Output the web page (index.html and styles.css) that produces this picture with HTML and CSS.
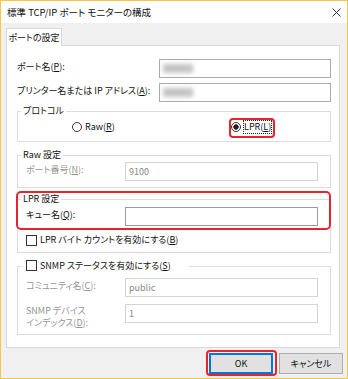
FILE: index.html
```html
<!DOCTYPE html>
<html lang="ja">
<head>
<meta charset="utf-8">
<title>標準 TCP/IP ポート モニターの構成</title>
<link rel="stylesheet" href="styles.css">
</head>
<body>
<div class="window">
  <div class="titlebar">
    <span class="title">標準 TCP/IP ポート モニターの構成</span>
    <svg class="close" width="9" height="9" viewBox="0 0 9 9"><path d="M0.5 0.5 L8.5 8.5 M8.5 0.5 L0.5 8.5" stroke="#333" stroke-width="1" fill="none"/></svg>
  </div>
  <div class="client">
    <div class="tabs"><div class="tab">ポートの設定</div></div>
    <div class="panel">
      <div class="row">
        <span class="lbl">ポート名(<u>P</u>):</span>
        <div class="input"><span class="blur"></span></div>
      </div>
      <div class="row">
        <span class="lbl">プリンター名または IP アドレス(<u>A</u>):</span>
        <div class="input"><span class="blur"></span></div>
      </div>
      <fieldset class="group proto">
        <legend>プロトコル</legend>
        <div class="radios">
          <div class="radio"><span class="rb"></span><span class="rtext">Raw(<u>R</u>)</span></div>
          <div class="radio"><span class="rb checked"></span><span class="rtext focus">LPR(<u>L</u>)</span></div>
        </div>
      </fieldset>
      <fieldset class="group raw">
        <legend>Raw 設定</legend>
        <div class="grow">
          <span class="glbl dis">ポート番号(<u>N</u>):</span>
          <div class="ginput dis">9100</div>
        </div>
      </fieldset>
      <fieldset class="group lpr">
        <legend>LPR 設定</legend>
        <div class="grow">
          <span class="glbl">キュー名(<u>Q</u>):</span>
          <div class="ginput en"></div>
        </div>
        <div class="check"><span class="cb"></span><span>LPR バイト カウントを有効にする(<u>B</u>)</span></div>
      </fieldset>
      <fieldset class="group snmp">
        <legend class="cblegend"><span class="cb"></span><span class="cbtext">SNMP ステータスを有効にする(<u>S</u>)</span></legend>
        <div class="grow">
          <span class="glbl dis">コミュニティ名(<u>C</u>):</span>
          <div class="ginput dis">public</div>
        </div>
        <div class="grow second">
          <span class="glbl dis two">SNMP デバイス<br>インデックス(<u>D</u>):</span>
          <div class="ginput dis">1</div>
        </div>
      </fieldset>
    </div>
    <div class="buttons">
      <button class="btn default">OK</button>
      <button class="btn">キャンセル</button>
    </div>
  </div>
  <div class="mark mark-radio"></div>
  <div class="mark mark-lpr"></div>
  <div class="mark mark-ok"></div>
</div>
</body>
</html>
```

FILE: styles.css
```css
* { box-sizing: border-box; }

body {
  margin: 0;
  font-family: "Noto Sans CJK JP", "Noto Sans", sans-serif;
  font-size: 9px;
  line-height: 14px;
  font-feature-settings: "palt";
  color: #111;
  background: #fff;
}

u { text-decoration: underline; text-underline-offset: 1px; }

.window {
  position: relative;
  width: 348px;
  height: 379px;
  border: 1px solid #f3c64a;
  background: #f0f0f0;
  display: flex;
  flex-direction: column;
  overflow: hidden;
}

.titlebar {
  flex: none;
  height: 22px;
  background: #fff;
  display: flex;
  align-items: center;
  justify-content: space-between;
  padding: 0 6px 0 6px;
}

.title { font-size: 9.5px; color: #111; white-space: nowrap; }

.close { display: block; }

.client {
  flex: 1;
  min-height: 0;
  display: flex;
  flex-direction: column;
  padding: 5px 4px 4px 5px;
}

.tabs { display: flex; flex: none; }

.tab {
  position: relative;
  z-index: 1;
  width: 56px;
  height: 18px;
  margin-bottom: -1px;
  border: 1px solid #d9d9d9;
  border-bottom: none;
  background: #fff;
  display: flex;
  align-items: center;
  justify-content: center;
  white-space: nowrap;
}

.panel {
  flex: 1;
  min-height: 0;
  margin-right: 3px;
  background: #fff;
  border: 1px solid #d9d9d9;
  padding: 13px 8px 0 10px;
  display: flex;
  flex-direction: column;
}

.row { display: flex; align-items: flex-start; flex: none; }
.row + .row { margin-top: 5px; }

.lbl { width: 142px; line-height: 16px; white-space: nowrap; }

.input {
  width: 172px;
  height: 19px;
  border: 1px solid #ababab;
  background: #fff;
}

.blur {
  display: block;
  width: 30px;
  height: 9px;
  margin: 4px 0 0 3px;
  background: #c4c4c4;
  filter: blur(2px);
}

.group {
  flex: none;
  margin: 0;
  min-width: 0;
  border: 1px solid #dcdcdc;
  padding: 0 12px 0 8px;
}

.group legend {
  padding: 0 2px;
  margin-left: -5px;
  line-height: 14px;
  white-space: nowrap;
}

.proto { margin-top: 2px; padding-top: 2px; padding-bottom: 7px; }
.raw { margin-top: 6px; padding-bottom: 6px; }
.lpr { margin-top: 4px; padding-top: 1px; padding-bottom: 5px; }
.snmp { margin-top: 6px; padding-top: 5px; padding-bottom: 5px; }

.radios {
  display: grid;
  grid-template-columns: 159px auto;
  padding-left: 46px;
  height: 14px;
  align-items: center;
}

.radio { display: flex; align-items: center; gap: 2px; }

.rb {
  flex: none;
  width: 10px;
  height: 10px;
  border: 1px solid #333;
  border-radius: 50%;
  background: #fff;
}

.rb.checked {
  background: radial-gradient(circle, #222 0 2.4px, #fff 3px);
}

.rtext { line-height: 12px; padding: 0; border: 1px solid transparent; white-space: nowrap; }
.focus { border: 1px dotted #222; }

.grow { display: flex; align-items: flex-start; }
.grow.second { margin-top: 7px; }

.glbl { width: 99px; line-height: 16px; white-space: nowrap; }
.glbl.two { line-height: 12px; padding-top: 1px; }

.ginput {
  width: 193px;
  height: 19px;
  border: 1px solid #ababab;
  background: #fff;
  padding-left: 3px;
  line-height: 17px;
}

.ginput.en { border-color: #9a9a9a; }

.dis { color: #959595; }
.ginput.dis { border-color: #d4d4d4; color: #8a8a8a; }

.check {
  display: flex;
  align-items: center;
  height: 14px;
  margin-top: 7px;
  white-space: nowrap;
}

.cb {
  flex: none;
  width: 11px;
  height: 11px;
  border: 1px solid #333;
  background: #fff;
  margin-right: 3px;
}

.cblegend .cb { display: inline-block; vertical-align: -2px; }
.group legend.cblegend { padding: 0 18px 0 5px; }

.buttons {
  flex: none;
  display: flex;
  justify-content: flex-end;
  gap: 6px;
  margin-top: 5px;
}

.btn {
  width: 64px;
  height: 21px;
  padding: 0;
  font: inherit;
  color: #111;
  background: #e1e1e1;
  border: 1px solid #adadad;
}

.btn.default { border: 2px solid #0078d7; }

.mark {
  position: absolute;
  border: 2px solid #e8232b;
  border-radius: 4px;
}

.mark-radio { left: 228px; top: 117px; width: 46px; height: 20px; }
.mark-lpr { left: 15px; top: 190px; width: 315px; height: 39px; border-radius: 5px; }
.mark-ok { left: 205px; top: 349px; width: 71px; height: 26px; }
```
